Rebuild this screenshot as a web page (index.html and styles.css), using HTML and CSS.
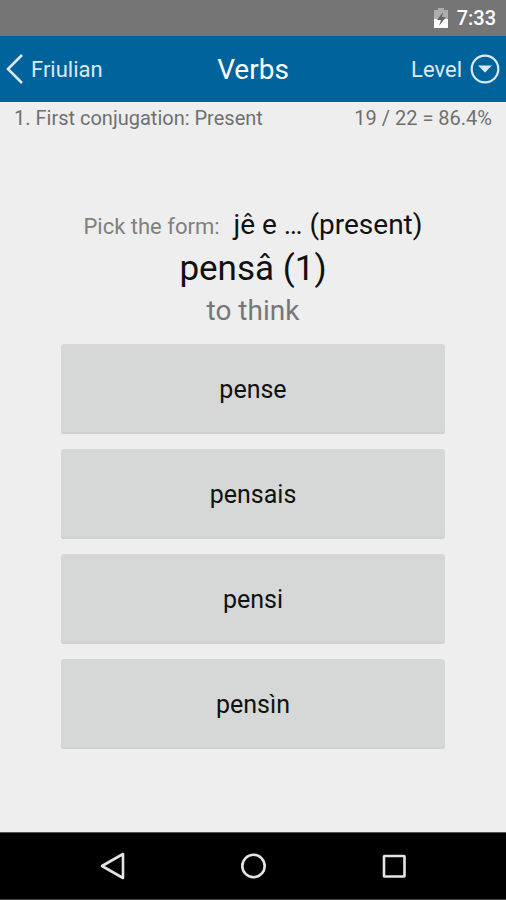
FILE: index.html
```html
<!DOCTYPE html>
<html lang="en">
<head>
<meta charset="utf-8">
<meta name="viewport" content="width=device-width, initial-scale=1">
<title>Verbs</title>
<link rel="stylesheet" href="styles.css">
</head>
<body>
<div class="status-bar">
  <svg class="battery" width="14" height="20" viewBox="0 0 14 20" aria-hidden="true">
    <path fill="#adadad" d="M4 0h6v2h4v9H0V2h4z"/>
    <path fill="#fff" d="M0 11h14v9H0z"/>
    <path fill="#666" d="M9 4L3 12h4l-2 6 7-9H8z"/>
  </svg>
  <time>7:33</time>
</div>
<header class="app-bar">
  <a class="back" href="#">
    <svg width="17" height="30" viewBox="0 0 17 30" aria-hidden="true"><path d="M16 1L2 15l14 14" fill="none" stroke="currentColor" stroke-width="2.6"/></svg>
    <span>Friulian</span>
  </a>
  <h1>Verbs</h1>
  <button class="level" type="button">
    <span>Level</span>
    <svg width="30" height="30" viewBox="0 0 30 30" aria-hidden="true"><circle cx="15" cy="15" r="13.3" fill="none" stroke="currentColor" stroke-width="2.2"/><path d="M8 11.5h14l-7 7z" fill="currentColor"/></svg>
  </button>
</header>
<main>
  <div class="progress">
    <span>1. First conjugation: Present</span>
    <span>19 / 22 = 86.4%</span>
  </div>
  <section class="quiz">
    <p class="prompt"><span class="hint">Pick the form:</span><span>jê e … (present)</span></p>
    <p class="verb">pensâ (1)</p>
    <p class="meaning">to think</p>
    <div class="answers">
      <button type="button">pense</button>
      <button type="button">pensais</button>
      <button type="button">pensi</button>
      <button type="button">pensìn</button>
    </div>
  </section>
</main>
<nav class="nav-bar">
  <button type="button" aria-label="Back"><svg width="28" height="28" viewBox="0 0 28 28" aria-hidden="true"><path d="M25 2v24L4 14z"/></svg></button>
  <button type="button" aria-label="Home"><svg width="28" height="28" viewBox="0 0 28 28" aria-hidden="true"><circle cx="14.5" cy="14" r="11.2"/></svg></button>
  <button type="button" aria-label="Overview"><svg width="28" height="28" viewBox="0 0 28 28" aria-hidden="true"><rect x="4" y="4" width="20.5" height="20.5" rx="0.5"/></svg></button>
</nav>
</body>
</html>
```
FILE: styles.css
```css
* { box-sizing: border-box; }
body {
  margin: 0;
  min-height: 100vh;
  display: flex;
  flex-direction: column;
  background: #eeeeee;
  color: #111;
  font-family: Roboto, "Liberation Sans", sans-serif;
}
button { border: 0; padding: 0; background: none; color: inherit; font: inherit; }
h1, p { margin: 0; font-weight: 400; }
svg { display: block; flex: none; }

.status-bar {
  height: 36px;
  padding: 0 10px;
  display: flex;
  align-items: center;
  justify-content: flex-end;
  gap: 9px;
  background: #757575;
  color: #fff;
  font-size: 20px;
  font-weight: 500;
}
.app-bar {
  height: 66px;
  padding: 0 6px;
  display: grid;
  grid-template-columns: 1fr auto 1fr;
  align-items: center;
  background: #00639c;
  color: #fff;
}
.app-bar h1 { font-size: 28px; }
.back, .level {
  display: flex;
  align-items: center;
  gap: 8px;
  color: #dbe9f2;
  font-size: 22px;
  text-decoration: none;
}
.level { justify-self: end; }

main { flex: 1; display: flex; flex-direction: column; }
.progress {
  padding: 4px 14px;
  display: flex;
  justify-content: space-between;
  color: #707070;
  font-size: 20px;
  line-height: 24px;
}
.quiz {
  flex: 1;
  padding: 0 12% 12px;
  display: flex;
  flex-direction: column;
  align-items: center;
  justify-content: center;
}
.prompt {
  display: flex;
  align-items: baseline;
  gap: 14px;
  font-size: 28px;
  line-height: 40px;
  white-space: nowrap;
}
.hint { color: #808080; font-size: 22px; }
.verb { font-size: 35px; line-height: 44px; }
.meaning { color: #777; font-size: 28px; line-height: 40px; }
.answers {
  width: 100%;
  margin-top: 13px;
  display: flex;
  flex-direction: column;
  gap: 15px;
}
.answers button {
  height: 90px;
  border-radius: 3px;
  background: #d6d8d7;
  box-shadow: inset 0 -2px #d0d2d1;
  font-size: 25px;
}

.nav-bar {
  height: 68px;
  padding: 0 42px;
  display: grid;
  grid-template-columns: repeat(3, 1fr);
  border-top: 1px solid #555;
  border-bottom: 1px solid #444;
  background: #000;
}
.nav-bar button { display: grid; place-items: center; }
.nav-bar svg { fill: none; stroke: #e4e4e4; stroke-width: 2.6; stroke-linejoin: round; }
```
